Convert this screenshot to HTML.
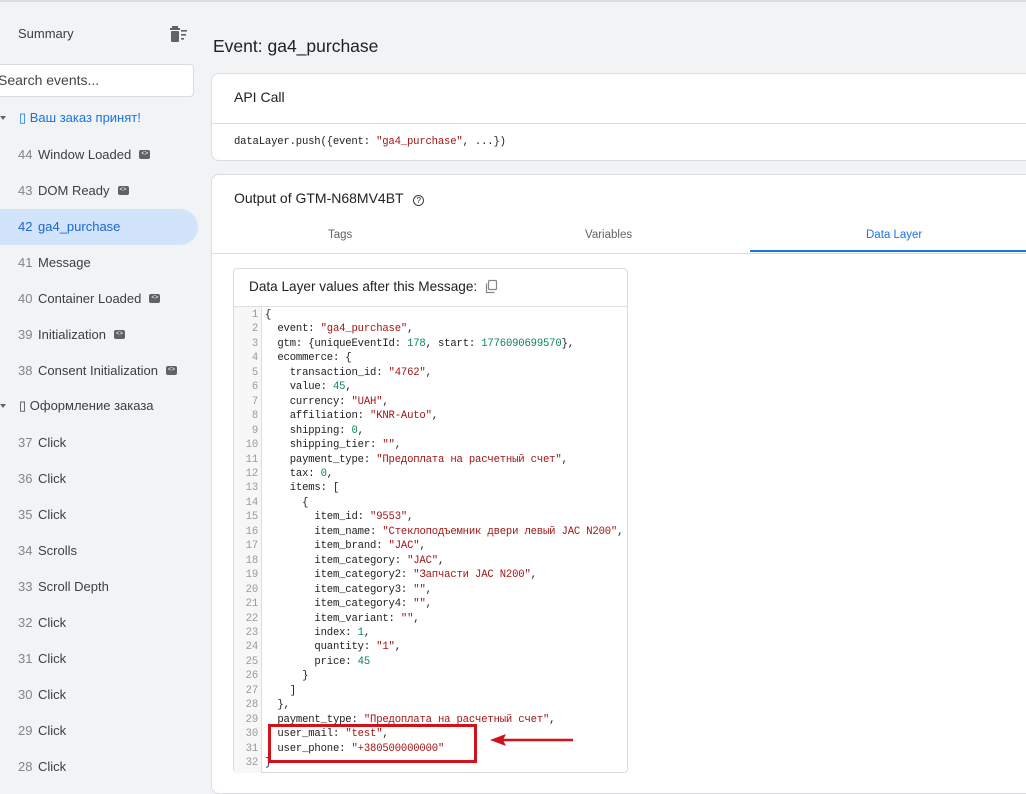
<!DOCTYPE html>
<html><head><meta charset="utf-8"><style>
*{margin:0;padding:0;box-sizing:border-box}
body{width:1026px;height:776px;overflow:hidden;background:#f1f3f4;font-family:"Liberation Sans","Noto Sans CJK SC",sans-serif;position:relative;color:#3c4043}
.topline{position:absolute;left:0;top:0;width:1026px;height:2px;background:#dadce0}
.sb{position:absolute;left:0;top:2px;width:210px;height:774px;background:#f1f3f4}
.it{position:absolute;left:0;height:36px;width:198px;font-size:13px;line-height:36px;white-space:nowrap}
.it .n{position:absolute;left:18px;color:#80868b}
.it .l{position:absolute;left:38px;color:#3c4043}
.sel{background:#d2e3fc;border-radius:0 18px 18px 0}
.sel .n,.sel .l{color:#1967d2}
.ic{display:inline-block;width:11px;height:9px;background:#5f6368;border-radius:2px;vertical-align:middle;margin-left:8px;position:relative;top:-1px;font-style:normal;font-size:6px;line-height:9px;color:#fff;text-align:center}
.grp{position:absolute;left:0;font-size:13px;line-height:20px;white-space:nowrap}
.tri{position:absolute;left:0;top:8px;width:0;height:0;border-left:3px solid transparent;border-right:3px solid transparent;border-top:4px solid #5f6368}
.card{position:absolute;left:211px;width:830px;background:#fff;border:1px solid #dadce0;border-radius:8px}
.code{position:absolute;left:265px;top:308px;font-size:10.6px;letter-spacing:-0.18px;line-height:14.45px;color:#202124;white-space:pre;font-family:"Liberation Mono",monospace}
.ln{position:absolute;left:234px;top:308px;width:24px;text-align:right;font-size:10.6px;letter-spacing:-0.18px;line-height:14.45px;color:#999;white-space:pre;font-family:"Liberation Mono",monospace}
.s{color:#a31515}.d{color:#098658}
</style></head><body>
<div class="topline"></div>
<div class="sb">
<div style="position:absolute;left:18px;top:24px;font-size:13px;color:#3c4043">Summary</div>
<svg style="position:absolute;left:170px;top:23px" width="20" height="18" viewBox="0 0 20 18"><rect x="2" y="1" width="6" height="2" fill="#5f6368"/><rect x="0" y="3" width="10" height="2" fill="#5f6368"/><rect x="1" y="6" width="8" height="11" rx="1" fill="#5f6368"/><rect x="11" y="5" width="6" height="1.6" fill="#5f6368"/><rect x="11" y="9" width="5" height="1.6" fill="#5f6368"/><rect x="11" y="13" width="3" height="1.6" fill="#5f6368"/></svg>
<div style="position:absolute;left:-10px;top:62px;width:204px;height:33px;background:#fff;border:1px solid #dadce0;border-radius:4px;font-size:14px;line-height:31px;padding-left:7px;color:#444">Search events...</div>
</div>
<div class="grp" style="top:108px"><span class="tri"></span><span style="position:absolute;left:19px;color:#1a73e8">▯ Ваш заказ принят!</span></div>
<div class="it" style="top:137px"><span class="n">44</span><span class="l">Window Loaded<i class="ic">&lt;&gt;</i></span></div>
<div class="it" style="top:173px"><span class="n">43</span><span class="l">DOM Ready<i class="ic">&lt;&gt;</i></span></div>
<div class="it sel" style="top:209px"><span class="n">42</span><span class="l">ga4_purchase</span></div>
<div class="it" style="top:245px"><span class="n">41</span><span class="l">Message</span></div>
<div class="it" style="top:281px"><span class="n">40</span><span class="l">Container Loaded<i class="ic">&lt;&gt;</i></span></div>
<div class="it" style="top:317px"><span class="n">39</span><span class="l">Initialization<i class="ic">&lt;&gt;</i></span></div>
<div class="it" style="top:353px"><span class="n">38</span><span class="l">Consent Initialization<i class="ic">&lt;&gt;</i></span></div>
<div class="grp" style="top:396px"><span class="tri"></span><span style="position:absolute;left:19px;color:#3c4043">▯ Оформление заказа</span></div>
<div class="it" style="top:425px"><span class="n">37</span><span class="l">Click</span></div>
<div class="it" style="top:461px"><span class="n">36</span><span class="l">Click</span></div>
<div class="it" style="top:497px"><span class="n">35</span><span class="l">Click</span></div>
<div class="it" style="top:533px"><span class="n">34</span><span class="l">Scrolls</span></div>
<div class="it" style="top:569px"><span class="n">33</span><span class="l">Scroll Depth</span></div>
<div class="it" style="top:605px"><span class="n">32</span><span class="l">Click</span></div>
<div class="it" style="top:641px"><span class="n">31</span><span class="l">Click</span></div>
<div class="it" style="top:677px"><span class="n">30</span><span class="l">Click</span></div>
<div class="it" style="top:713px"><span class="n">29</span><span class="l">Click</span></div>
<div class="it" style="top:749px"><span class="n">28</span><span class="l">Click</span></div>

<div style="position:absolute;left:213px;top:36px;font-size:17.5px;color:#202124">Event: ga4_purchase</div>
<div class="card" style="top:73px;height:88px">
<div style="position:absolute;left:22px;top:15px;font-size:14px;color:#202124">API Call</div>
<div style="position:absolute;left:0;top:49px;width:100%;height:1px;background:#dadce0"></div>
<div style="position:absolute;left:22px;top:62px;font-size:10.6px;letter-spacing:-0.18px;font-family:'Liberation Mono',monospace;color:#202124;white-space:pre">dataLayer.push({event: <span class="s">"ga4_purchase"</span>, ...})</div>
</div>
<div class="card" style="top:174px;height:620px">
<div style="position:absolute;left:22px;top:15px;font-size:14px;color:#202124">Output of GTM-N68MV4BT <span style="display:inline-block;width:11px;height:11px;border:1.3px solid #3c4043;border-radius:50%;font-size:8px;line-height:9px;text-align:center;margin-left:6px;vertical-align:0">?</span></div>
<div style="position:absolute;left:116px;top:54px;font-size:11.5px;color:#5f6368">Tags</div>
<div style="position:absolute;left:373px;top:54px;font-size:11.5px;color:#5f6368">Variables</div>
<div style="position:absolute;left:654px;top:54px;font-size:11.5px;color:#1a73e8">Data Layer</div>
<div style="position:absolute;left:538px;top:75px;width:300px;height:2px;background:#1a73e8"></div>
<div style="position:absolute;left:0;top:78px;width:100%;height:1px;background:#dadce0"></div>
</div>
<div style="position:absolute;left:233px;top:268px;width:395px;height:505px;background:#fff;border:1px solid #dadce0;border-radius:4px">
<div style="position:absolute;left:15px;top:10px;font-size:13.6px;color:#202124;white-space:nowrap">Data Layer values after this Message:</div>
<svg style="position:absolute;left:249px;top:10px" width="16" height="16" viewBox="0 0 16 16" fill="none" stroke="#80868b" stroke-width="1.2"><rect x="5.5" y="1.5" width="8" height="9" rx="1"/><path d="M3.5 4.5v9h8"/></svg>
<div style="position:absolute;left:0;top:37px;width:100%;height:1px;background:#e0e0e0"></div>
<div style="position:absolute;left:0;top:38px;width:28px;height:466px;background:#f7f7f7;border-right:1px solid #ddd"></div>
</div>
<div class="ln">1
2
3
4
5
6
7
8
9
10
11
12
13
14
15
16
17
18
19
20
21
22
23
24
25
26
27
28
29
30
31
32</div>
<div class="code">{
  event: <span class="s">"ga4_purchase"</span>,
  gtm: {uniqueEventId: <span class="d">178</span>, start: <span class="d">1776090699570</span>},
  ecommerce: {
    transaction_id: <span class="s">"4762"</span>,
    value: <span class="d">45</span>,
    currency: <span class="s">"UAH"</span>,
    affiliation: <span class="s">"KNR-Auto"</span>,
    shipping: <span class="d">0</span>,
    shipping_tier: <span class="s">""</span>,
    payment_type: <span class="s">"Предоплата на расчетный счет"</span>,
    tax: <span class="d">0</span>,
    items: [
      {
        item_id: <span class="s">"9553"</span>,
        item_name: <span class="s">"Стеклоподъемник двери левый JAC N200"</span>,
        item_brand: <span class="s">"JAC"</span>,
        item_category: <span class="s">"JAC"</span>,
        item_category2: <span class="s">"Запчасти JAC N200"</span>,
        item_category3: <span class="s">""</span>,
        item_category4: <span class="s">""</span>,
        item_variant: <span class="s">""</span>,
        index: <span class="d">1</span>,
        quantity: <span class="s">"1"</span>,
        price: <span class="d">45</span>
      }
    ]
  },
  payment_type: <span class="s">"Предоплата на расчетный счет"</span>,
  user_mail: <span class="s">"test"</span>,
  user_phone: <span class="s">"+380500000000"</span>
}</div>
<div style="position:absolute;left:268px;top:724px;width:209px;height:39px;border:3px solid #d0121b"></div>
<svg style="position:absolute;left:488px;top:730px" width="88" height="20" viewBox="0 0 88 20"><path d="M85 10H14" stroke="#d0121b" stroke-width="2.5"/><path d="M2 10L18 4L15 10L18 16Z" fill="#d0121b"/></svg>
</body></html>
